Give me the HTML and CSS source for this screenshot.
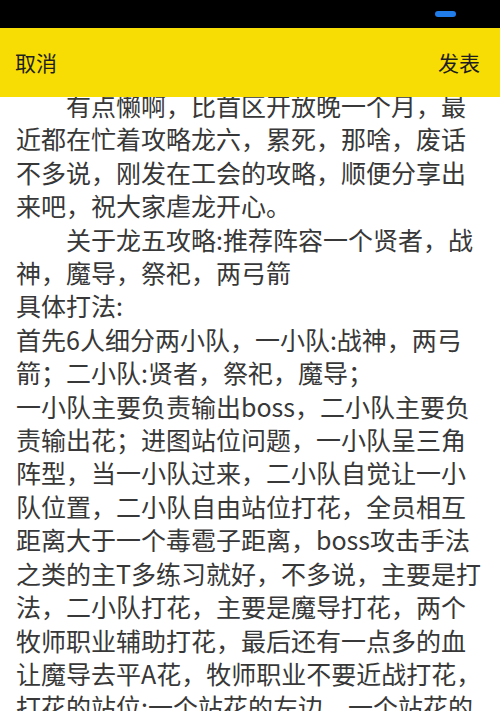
FILE: index.html
```html
<!DOCTYPE html>
<html lang="zh-CN">
<head>
    <meta charset="UTF-8">
    <meta name="viewport" content="width=device-width, initial-scale=1.0">
    <title>发表攻略</title>
    <link rel="stylesheet" href="styles.css">
</head>
<body>
    <div class="status-bar">
        <span class="status-pill"></span>
    </div>
    <header class="header">
        <span class="header-btn">取消</span>
        <span class="header-btn">发表</span>
    </header>
    <div class="editor">
        <p class="indent">有点懒啊，比首区开放晚一个月，最近都在忙着攻略龙六，累死，那啥，废话不多说，刚发在工会的攻略，顺便分享出来吧，祝大家虐龙开心。</p>
        <p class="indent">关于龙五攻略:推荐阵容一个贤者，战神，魔导，祭祀，两弓箭</p>
        <p>具体打法:</p>
        <p>首先6人细分两小队，一小队:战神，两弓箭；二小队:贤者，祭祀，魔导；</p>
        <p>一小队主要负责输出boss，二小队主要负责输出花；进图站位问题，一小队呈三角阵型，当一小队过来，二小队自觉让一小队位置，二小队自由站位打花，全员相互距离大于一个毒雹子距离，boss攻击手法之类的主T多练习就好，不多说，主要是打法，二小队打花，主要是魔导打花，两个牧师职业辅助打花，最后还有一点多的血让魔导去平A花，牧师职业不要近战打花，打花的站位:一个站花的左边，一个站花的右边。</p>
    </div>
</body>
</html>
```

FILE: styles.css
```css
body {
    margin: 0;
    padding: 0;
    width: 500px;
    height: 711px;
    overflow: hidden;
    background: #fff;
    font-family: "Noto Sans CJK SC", "Noto Sans", sans-serif;
}

.status-bar {
    height: 28px;
    background: #000;
    display: flex;
    justify-content: flex-end;
    align-items: flex-start;
    padding-right: 44px;
}

.status-pill {
    width: 21px;
    height: 6px;
    margin-top: 11px;
    background: #1f7ce8;
    border-radius: 3px;
}

.header {
    position: relative;
    z-index: 2;
    height: 69px;
    background: #f7dd03;
    display: flex;
    justify-content: space-between;
    align-items: center;
    padding: 0 20px 0 15px;
}

.header-btn {
    font-size: 21px;
    color: #1e1e1e;
    line-height: 1;
}

.editor {
    margin-top: -8px;
    padding: 0 14px 0 16px;
    font-size: 25px;
    line-height: 33.4px;
    color: #383838;
}

.editor p {
    margin: 0;
}

.editor .indent {
    text-indent: 2em;
}
```
